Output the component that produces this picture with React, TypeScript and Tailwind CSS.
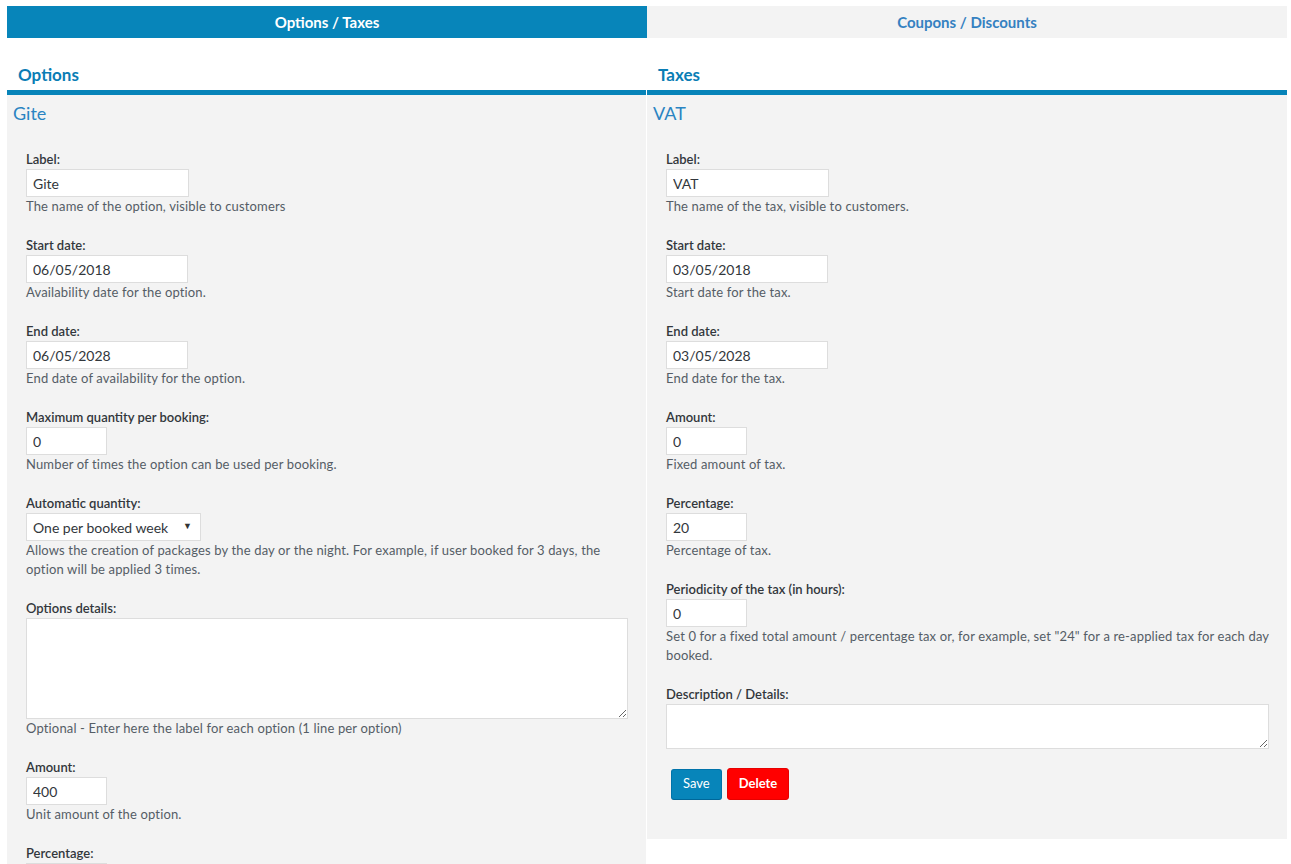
import React from 'react'

type Field = {
  label: string
  value?: string
  width?: string
  help?: React.ReactNode
  kind?: 'input' | 'select' | 'textarea'
  rows?: string
}

const optionFields: Field[] = [
  { label: 'Label:', value: 'Gite', width: 'w-[163px]', help: 'The name of the option, visible to customers' },
  { label: 'Start date:', value: '06/05/2018', width: 'w-[162px]', help: 'Availability date for the option.' },
  { label: 'End date:', value: '06/05/2028', width: 'w-[162px]', help: 'End date of availability for the option.' },
  { label: 'Maximum quantity per booking:', value: '0', width: 'w-[81px]', help: 'Number of times the option can be used per booking.' },
  {
    label: 'Automatic quantity:',
    value: 'One per booked week',
    kind: 'select',
    help: 'Allows the creation of packages by the day or the night. For example, if user booked for 3 days, the option will be applied 3 times.',
  },
  { label: 'Options details:', kind: 'textarea', rows: 'h-[101px]', help: 'Optional - Enter here the label for each option (1 line per option)' },
  { label: 'Amount:', value: '400', width: 'w-[81px]', help: 'Unit amount of the option.' },
  { label: 'Percentage:', value: '0', width: 'w-[81px]', help: 'Percentage of the option.' },
  { label: 'Periodicity (in hours):', value: '0', width: 'w-[81px]', help: 'Periodicity of the option.' },
]

const taxFields: Field[] = [
  { label: 'Label:', value: 'VAT', width: 'w-[163px]', help: 'The name of the tax, visible to customers.' },
  { label: 'Start date:', value: '03/05/2018', width: 'w-[162px]', help: 'Start date for the tax.' },
  { label: 'End date:', value: '03/05/2028', width: 'w-[162px]', help: 'End date for the tax.' },
  { label: 'Amount:', value: '0', width: 'w-[81px]', help: 'Fixed amount of tax.' },
  { label: 'Percentage:', value: '20', width: 'w-[81px]', help: 'Percentage of tax.' },
  {
    label: 'Periodicity of the tax (in hours):',
    value: '0',
    width: 'w-[81px]',
    help: 'Set 0 for a fixed total amount / percentage tax or, for example, set "24" for a re-applied tax for each day booked.',
  },
  { label: 'Description / Details:', kind: 'textarea', rows: 'h-[45px]' },
]

function FormField({ f }: { f: Field }) {
  return (
    <div className="mb-[20px]">
      <label className="block text-[13px] leading-[19px] font-semibold text-[#32373c]">{f.label}</label>
      {f.kind === 'select' ? (
        <div className="relative w-[175px]">
          <select
            defaultValue={f.value}
            className="appearance-none w-full h-[28px] bg-white border border-[#dddddd] pl-[6px] pr-6 text-[14px] text-[#32373c] outline-none"
          >
            <option>One per booked week</option>
            <option>One per booked day</option>
            <option>None</option>
          </select>
          <span className="pointer-events-none absolute right-[9px] top-[6px] text-[9px] text-[#333]">▼</span>
        </div>
      ) : f.kind === 'textarea' ? (
        <textarea className={`block w-full ${f.rows} bg-white border border-[#dddddd] outline-none`} />
      ) : (
        <input
          defaultValue={f.value}
          className={`block ${f.width} h-[28px] bg-white border border-[#dddddd] px-[6px] text-[14px] text-[#32373c] outline-none`}
        />
      )}
      {f.help && <p className="text-[13px] leading-[19px] tracking-[0.15px] text-[#555d66]">{f.help}</p>}
    </div>
  )
}

function Column({ heading, title, fields, buttons }: { heading: string; title: string; fields: Field[]; buttons?: boolean }) {
  return (
    <div className="flex flex-col">
      <h2 className="pt-[25px] pb-[3px] px-[11px] text-[17px] leading-[24px] font-bold text-[#0a7db5] border-b-[5px] border-[#0784b9]">
        {heading}
      </h2>
      <div className={`bg-[#f3f3f3] ${buttons ? 'pb-[39px]' : 'pb-6'}`}>
        <h3 className="px-[6px] pt-[6px] text-[18px] leading-[24px] text-[#2a84c2]">{title}</h3>
        <div className="pl-[19px] pr-[18px] pt-[25px]">
          {fields.map((f) => (
            <FormField key={f.label} f={f} />
          ))}
          {buttons && (
            <div className="flex items-center gap-[5px] pl-[5px] -mt-[1px]">
              <button className="h-[31px] px-[11px] rounded-[3px] bg-[#0785ba] border border-[#0073aa] border-b-[#006799] text-white text-[13px]">
                Save
              </button>
              <button className="h-[32px] px-[11px] rounded-[3px] bg-[#ff0000] border border-[#e60000] text-white text-[13px] font-bold">
                Delete
              </button>
            </div>
          )}
        </div>
      </div>
    </div>
  )
}

export default function App() {
  return (
    <div className="min-h-screen bg-white pt-[6px] pl-[7px] pr-[4px] font-['Lato',sans-serif]">
      <div className="grid grid-cols-2 w-[1280px]">
        <div className="h-[32px] flex items-center justify-center bg-[#0785ba] text-white font-bold text-[15px]">
          Options / Taxes
        </div>
        <div className="h-[32px] flex items-center justify-center bg-[#f3f3f3] text-[#3581c1] font-bold text-[15px]">
          Coupons / Discounts
        </div>
      </div>
      <div className="grid grid-cols-[639px_640px] gap-[1px] w-[1280px] items-start">
        <Column heading="Options" title="Gite" fields={optionFields} />
        <Column heading="Taxes" title="VAT" fields={taxFields} buttons />
      </div>
    </div>
  )
}
